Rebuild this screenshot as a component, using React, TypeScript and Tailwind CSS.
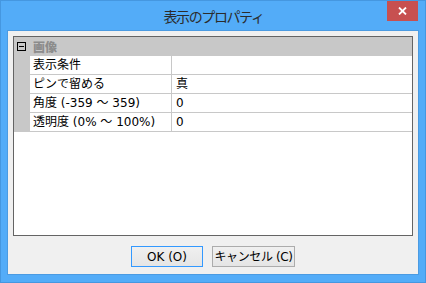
import React from "react";

const FONT = { fontFamily: '"DejaVu Sans", "Noto Sans CJK JP", sans-serif' };

const rows: [string, string][] = [
  ["表示条件", ""],
  ["ピンで留める", "真"],
  ["角度 (-359 ～ 359)", "0"],
  ["透明度 (0% ～ 100%)", "0"],
];

export default function App() {
  return (
    <div
      className="w-[426px] h-[283px] bg-[#53acf8] border border-[#4597e0] flex flex-col overflow-hidden"
      style={FONT}
    >
      <div className="relative h-[29px] shrink-0 flex items-center justify-center">
        <span
          className="text-[14px] tracking-[-1.4px] text-[#2b2b2b] leading-none mt-[1px] pl-[1px]"
          style={{ fontFamily: '"Noto Sans CJK JP", sans-serif' }}
        >
          表示のプロパティ
        </span>
        <div className="absolute -top-px right-[7px] w-[31px] h-[21px] bg-[#c75050] flex items-center justify-center">
          <svg width="9" height="8" viewBox="0 0 9 8">
            <path d="M1 0.5 L8 7.5 M8 0.5 L1 7.5" stroke="#fff" strokeWidth="1.8" />
          </svg>
        </div>
      </div>
      <div className="mx-[6px] mb-[7px] h-[246px] border border-[#4b9be2] bg-[#f0f0f0] flex flex-col">
        <div className="mx-[5px] mt-[5px] h-[200px] border border-[#646464] bg-white flex flex-col">
          <div className="h-[19px] bg-[#c8c8c8] flex items-center">
            <div className="ml-[3px] w-[9px] h-[9px] border border-black flex items-center justify-center">
              <div className="w-[5px] h-px bg-black" />
            </div>
            <span
              className="ml-[7px] text-[12px] font-bold text-[#8c8c8c] leading-none"
              style={{ fontFamily: '"Noto Sans CJK JP", sans-serif', fontWeight: 900 }}
            >
              画像
            </span>
          </div>
          {rows.map(([k, v]) => (
            <div key={k} className="h-[19px] flex border-b border-[#c8c8c8]">
              <div className="w-[16px] bg-[#c8c8c8] shrink-0" />
              <div className="w-[142px] pl-[3px] flex items-center text-[12px] text-black leading-none border-r border-[#c8c8c8] shrink-0 whitespace-nowrap">
                {k}
              </div>
              <div className="flex-1 pl-[4px] flex items-center text-[12px] text-black leading-none">
                {v}
              </div>
            </div>
          ))}
        </div>
        <div className="mt-[10px] flex justify-center gap-[9px]">
          <button className="w-[72px] h-[21px] border border-[#3399ff] bg-gradient-to-b from-[#f0f0f0] to-[#e5e5e5] text-[12px] text-black flex items-center justify-center leading-none">
            OK (O)
          </button>
          <button className="w-[83px] h-[21px] border border-[#acacac] bg-gradient-to-b from-[#f0f0f0] to-[#e5e5e5] text-[12px] text-black flex items-center justify-center leading-none whitespace-nowrap tracking-[-0.4px]">
            キャンセル (C)
          </button>
        </div>
      </div>
    </div>
  );
}
